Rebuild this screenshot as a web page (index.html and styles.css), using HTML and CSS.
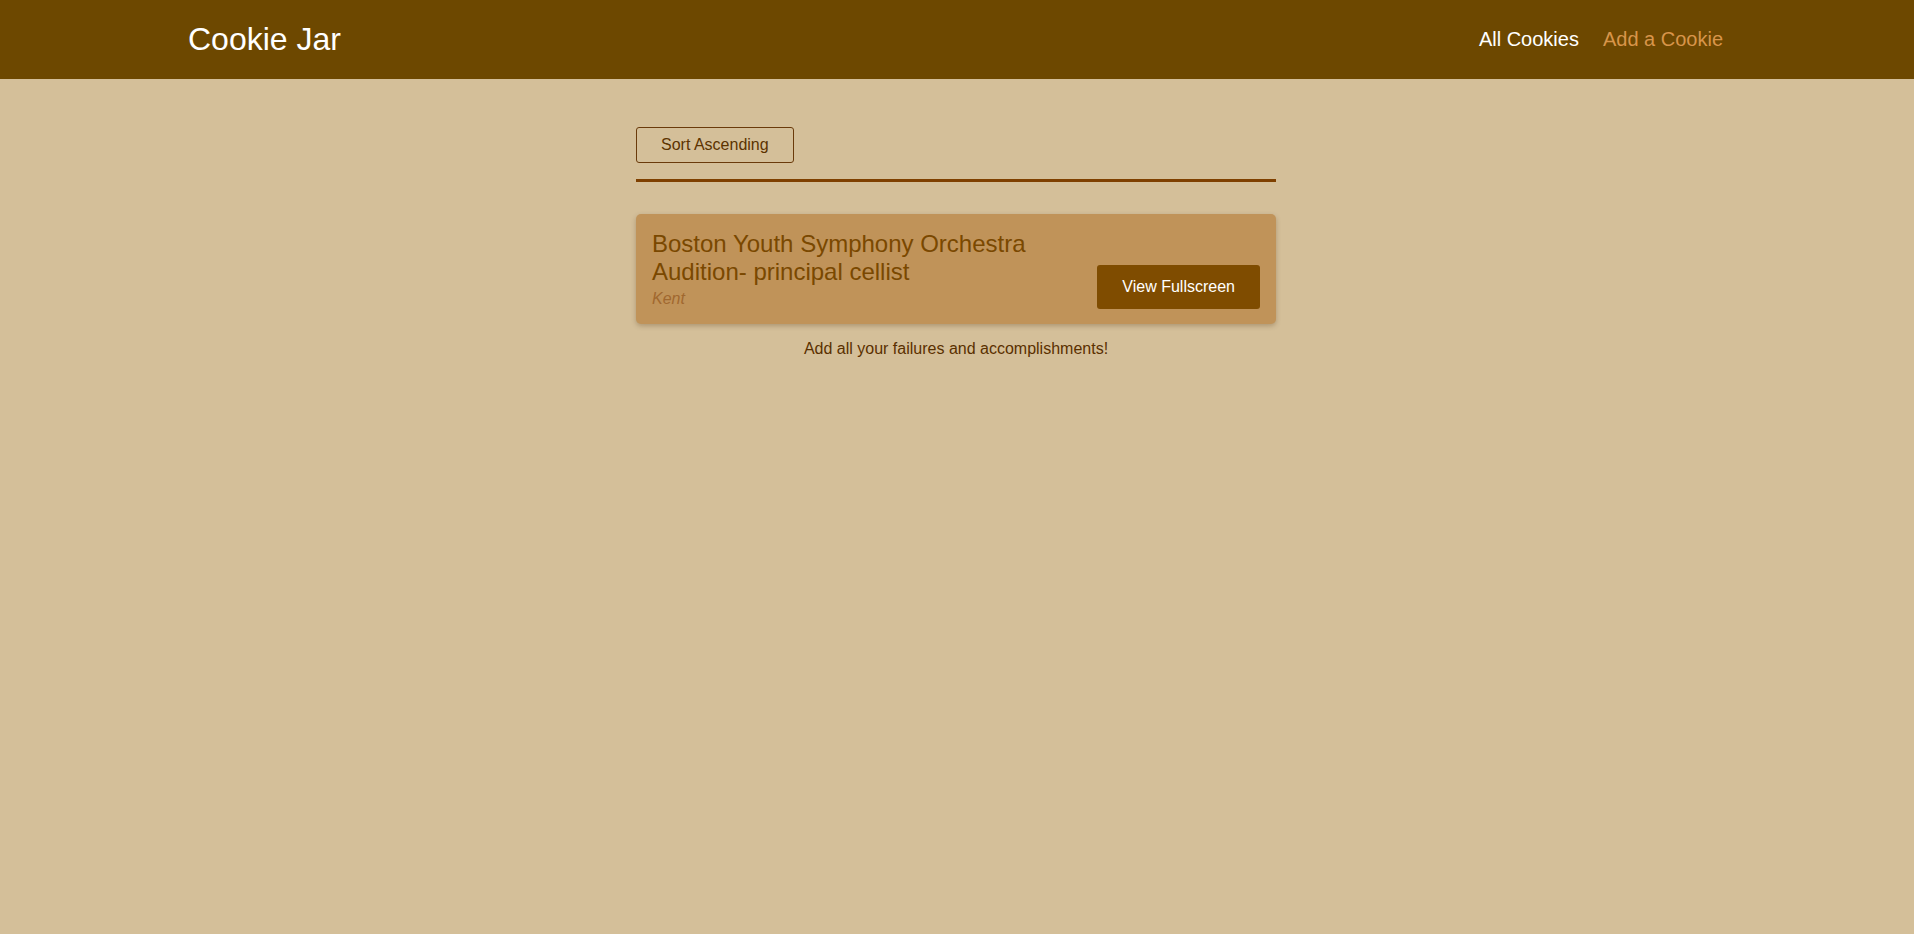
FILE: index.html
```html
<!DOCTYPE html>
<html lang="en">
<head>
<meta charset="utf-8">
<title>Cookie Jar</title>
<link rel="stylesheet" href="styles.css">
</head>
<body>
<header class="topbar">
  <div class="topbar-inner">
    <a class="brand" href="#">Cookie Jar</a>
    <nav class="nav">
      <a class="nav-link active" href="#">All Cookies</a>
      <a class="nav-link accent" href="#">Add a Cookie</a>
    </nav>
  </div>
</header>
<main class="content">
  <div class="toolbar">
    <button class="sort-btn" type="button">Sort Ascending</button>
  </div>
  <hr class="divider">
  <div class="card">
    <div class="card-text">
      <h2 class="card-title">Boston Youth Symphony Orchestra Audition- principal cellist</h2>
      <p class="card-author">Kent</p>
    </div>
    <button class="view-btn" type="button">View Fullscreen</button>
  </div>
  <p class="footer-note">Add all your failures and accomplishments!</p>
</main>
</body>
</html>
```
FILE: styles.css
```css
html, body {
  margin: 0;
  padding: 0;
}
body {
  background: #d4bf99;
  font-family: "Liberation Sans", Arial, sans-serif;
  color: #5a3000;
  min-height: 934px;
}
.topbar {
  background: #6d4800;
  height: 79px;
  padding: 0 191px 0 188px;
}
.topbar-inner {
  height: 100%;
  display: flex;
  align-items: center;
  justify-content: space-between;
}
.brand {
  color: #ffffff;
  font-size: 32px;
  text-decoration: none;
}
.nav {
  display: flex;
  gap: 24px;
}
.nav-link {
  font-size: 20px;
  text-decoration: none;
  color: #ffffff;
}
.nav-link.accent {
  color: #d8954a;
}
.content {
  width: 640px;
  margin-left: calc(50% - 321px);
  padding-top: 48px;
}
.toolbar {
  display: flex;
}
.sort-btn {
  font-family: "Liberation Sans", Arial, sans-serif;
  font-size: 16px;
  color: #5c3300;
  background: transparent;
  border: 1px solid #6a3a0a;
  border-radius: 3px;
  height: 36px;
  padding: 0 24px;
  cursor: pointer;
}
.divider {
  border: none;
  height: 3px;
  background: #7f4000;
  margin: 16px 0 32px;
}
.card {
  background: #c09359;
  border-radius: 5px;
  box-shadow: 0 2px 5px rgba(60, 30, 0, 0.25);
  padding: 16px;
  display: flex;
  align-items: flex-end;
  justify-content: space-between;
  gap: 16px;
}
.card-text {
  flex: 1;
  min-width: 0;
  max-width: 380px;
}
.card-title {
  margin: 0 0 4px;
  font-size: 24px;
  font-weight: normal;
  color: #7a4800;
}
.card-author {
  margin: 0;
  font-size: 16px;
  line-height: 18px;
  font-style: italic;
  color: #a0682f;
}
.view-btn {
  font-family: "Liberation Sans", Arial, sans-serif;
  font-size: 16px;
  color: #ffffff;
  background: #7f4c00;
  border: none;
  border-radius: 3px;
  height: 44px;
  padding: 0 25px;
  margin-bottom: -1px;
  cursor: pointer;
}
.footer-note {
  margin: 16px 0 0;
  text-align: center;
  font-size: 16px;
  color: #5a3000;
}
```
